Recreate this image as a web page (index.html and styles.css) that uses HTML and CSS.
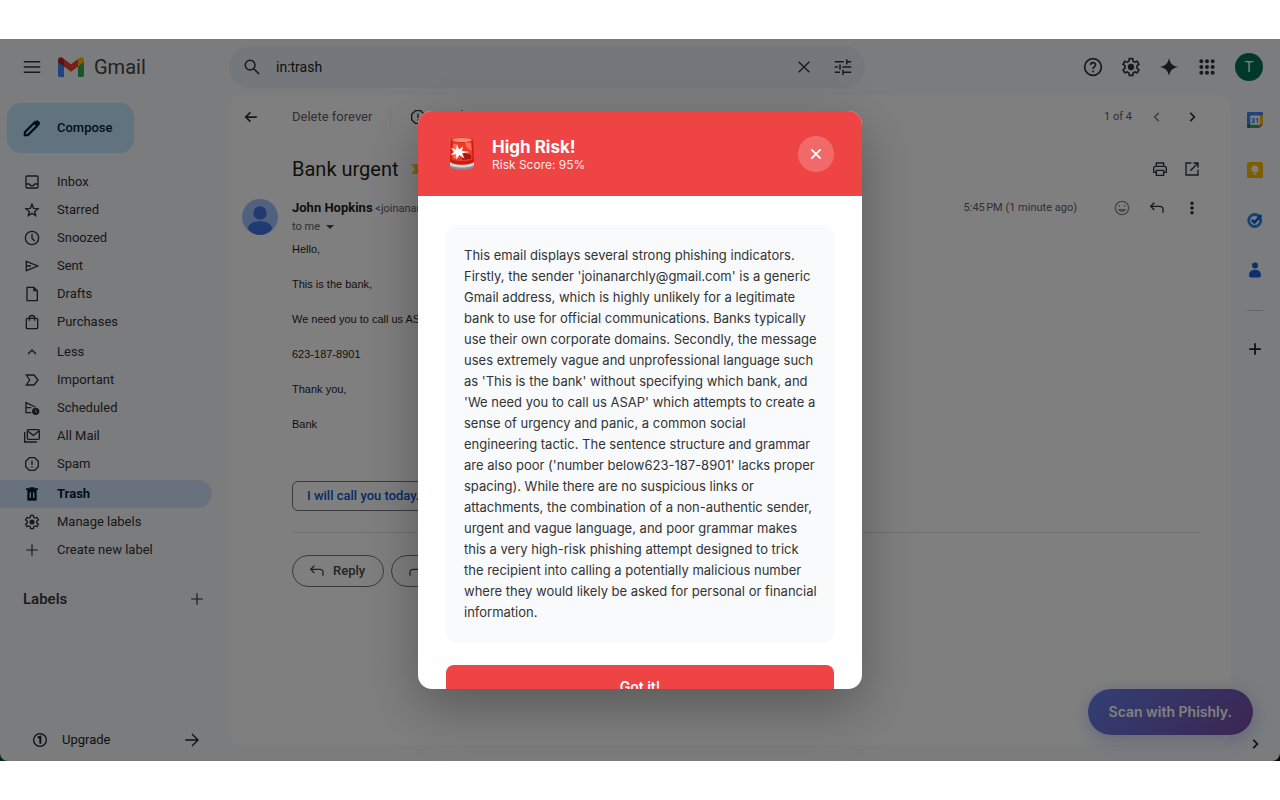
FILE: index.html
```html
<!DOCTYPE html>
<html lang="en">
<head>
<meta charset="utf-8">
<meta name="viewport" content="width=device-width, initial-scale=1">
<title>Bank urgent - Gmail</title>
<link rel="stylesheet" href="styles.css">
</head>
<body>
<svg class="sprite" aria-hidden="true">
  <symbol id="i-menu" viewBox="0 0 24 24"><path d="M1 5h22M1 12h22M1 19h22"/></symbol>
  <symbol id="i-search" viewBox="0 0 24 24"><circle cx="9.500" cy="9.500" r="6.500"/><path d="M14 14l7.500 7.500"/></symbol>
  <symbol id="i-close" viewBox="0 0 24 24"><path d="M4 4l16 16M20 4L4 20"/></symbol>
  <symbol id="i-tune" viewBox="0 0 24 24"><path d="M1 5h12M17 1.500v7M17 5h6M1 12h4M8 8.500v7M11 12h12M1 19h7M12 15.500v7M12 19h11"/></symbol>
  <symbol id="i-help" viewBox="0 0 24 24"><circle cx="12" cy="12" r="10"/><path d="M9 9.700c0-4 6-4 6-.3 0 2.300-3 2.500-3 5M12 16.300v2"/></symbol>
  <symbol id="i-gear" viewBox="0 0 24 24"><path d="M10 2h4l.6 3 2 1.200 2.900-1 2 3.500-2.300 2v2.700l2.300 2-2 3.500-2.900-1-2 1.200-.6 2.900h-4l-.6-2.900-2-1.200-2.900 1-2-3.500 2.300-2v-2.700l-2.300-2 2-3.500 2.900 1 2-1.200z"/><circle class="solid" cx="12" cy="12" r="3.800"/></symbol>
  <symbol id="i-spark" viewBox="0 0 24 24"><path class="solid" d="M12 0c1.400 7.200 4.800 10.600 12 12-7.200 1.400-10.600 4.800-12 12-1.400-7.200-4.800-10.600-12-12C7.200 10.600 10.600 7.200 12 0z"/></symbol>
  <symbol id="i-apps" viewBox="0 0 24 24"><path class="dots" d="M3.500 3.500h0M12 3.500h0M20.500 3.500h0M3.500 12h0M12 12h0M20.500 12h0M3.500 20.500h0M12 20.500h0M20.500 20.500h0"/></symbol>
  <symbol id="i-pencil" viewBox="0 0 24 24"><path class="bold" d="M2.500 21.500v-4L15.500 4.500l4 4L6.500 21.500z"/><path class="solid" d="M14 6l3-3.500c1-1.300 2.500-1.300 3.500 0l1.500 1.500c1 1 1 2.500 0 3.500L18 10z"/></symbol>
  <symbol id="i-inbox" viewBox="0 0 24 24"><rect x="3" y="3" width="18" height="18" rx="1.500"/><path d="M3 15h5c1 3.500 7 3.500 8 0h5"/></symbol>
  <symbol id="i-star" viewBox="0 0 24 24"><path d="M12 3.500l2.500 6 6.500.5-5 4.200 1.600 6.300L12 17l-5.600 3.500L8 14.200 3 10l6.500-.5z"/></symbol>
  <symbol id="i-clock" viewBox="0 0 24 24"><circle cx="12" cy="12" r="10"/><path d="M12 5.500v7l4 4"/></symbol>
  <symbol id="i-sent" viewBox="0 0 24 24"><path d="M3.500 5l17 7-17 7zM4 12h6.500"/></symbol>
  <symbol id="i-draft" viewBox="0 0 24 24"><path d="M4.500 2H15l5 5v15H4.500z"/><path class="solid" d="M14 2l6 6h-6z"/></symbol>
  <symbol id="i-bag" viewBox="0 0 24 24"><rect x="3.500" y="6.500" width="17" height="15.500" rx="1.500"/><path d="M8 10V6c0-5 8-5 8 0v4"/></symbol>
  <symbol id="i-up" viewBox="0 0 24 24"><path d="M6 15l6-6 6 6"/></symbol>
  <symbol id="i-important" viewBox="0 0 24 24"><path d="M3.500 4.500h11.500l6 7.500-6 7.500H3.500l5-7.500z"/></symbol>
  <symbol id="i-scheduled" viewBox="0 0 24 24"><path d="M11 19H3V4l14 6.500M3 11.500h8"/><circle class="solid" cx="17.500" cy="17" r="5.500"/><path class="hand" d="M17.500 14v3.500l2 1.500"/></symbol>
  <symbol id="i-allmail" viewBox="0 0 24 24"><rect x="5" y="2.500" width="18" height="14.500" rx="1.500"/><path d="M5.500 4.500L14 11l8.500-6.500M1 6v15h18.500"/></symbol>
  <symbol id="i-spam" viewBox="0 0 24 24"><path d="M8 2.500h8L21.500 8v8L16 21.500H8L2.500 16V8z"/><path d="M12 7v6.500M12 15.500v2"/></symbol>
  <symbol id="i-trash" viewBox="0 0 24 24"><path class="solid" d="M8.500 2h7v1.500H21V6H3V3.500h5.500z"/><path class="solid" d="M5 6h14v16H5z"/><path class="cut" d="M9.500 9.500v8.500M14.500 9.500v8.500"/></symbol>
  <symbol id="i-plus" viewBox="0 0 24 24"><path d="M12 2v20M2 12h20"/></symbol>
  <symbol id="i-one" viewBox="0 0 24 24"><circle cx="12" cy="12" r="9.500"/><path class="bold" d="M8.500 8.500L12.500 7v10.500"/></symbol>
  <symbol id="i-right" viewBox="0 0 24 24"><path d="M2 12h19M12 3l9 9-9 9"/></symbol>
  <symbol id="i-left" viewBox="0 0 24 24"><path d="M22 12H4M11 4l-8 8 8 8"/></symbol>
  <symbol id="i-prev" viewBox="0 0 24 24"><path d="M15 5l-7 7 7 7"/></symbol>
  <symbol id="i-next" viewBox="0 0 24 24"><path d="M9 5l7 7-7 7"/></symbol>
  <symbol id="i-move" viewBox="0 0 24 24"><path d="M12 2v12M7 9l5 5 5-5M3 16v5h18v-5"/></symbol>
  <symbol id="i-print" viewBox="0 0 24 24"><path d="M6.500 8V3h11v5M6.500 17H2.500v-6c0-2 1-3 3-3h13c2 0 3 1 3 3v6h-4"/><path d="M6.500 14h11v7.500h-11z"/></symbol>
  <symbol id="i-open" viewBox="0 0 24 24"><path d="M11 3H3v18h18v-8M14 3h7v7M21 3L9.500 14.500"/></symbol>
  <symbol id="i-smile" viewBox="0 0 24 24"><circle cx="12" cy="12" r="10"/><path d="M7.500 14.500c2 3.500 7 3.500 9 0zM8 8v2M16 8v2"/></symbol>
  <symbol id="i-reply" viewBox="0 0 24 24"><path d="M8 4L2.500 9.500 8 15M3 9.500h13c3 0 5 2 5 4.500v5"/></symbol>
  <symbol id="i-forward" viewBox="0 0 24 24"><path d="M16 4l5.500 5.500L16 15M21 9.500H8c-3 0-5 2-5 4.500v5"/></symbol>
  <symbol id="i-dots" viewBox="0 0 24 24"><path class="dots" d="M12 4h0M12 12h0M12 20h0"/></symbol>
</svg>

<div class="frame">
  <div class="app">
    <header class="topbar">
      <div class="brand">
        <button class="icon-btn" aria-label="Main menu"><svg class="icon l"><use href="#i-menu"/></svg></button>
        <svg class="logo" viewBox="0 0 26 20" aria-hidden="true">
          <path fill="#4285f4" d="M0 4l6 4.500V20H1.800C.7 20 0 19.300 0 18.200z"/>
          <path fill="#34a853" d="M20 8.500L26 4v14.200c0 1.100-.7 1.800-1.800 1.800H20z"/>
          <path fill="#fbbc04" d="M20 2l1.600-1.200C23.500-.6 26 .5 26 3v2l-6 4.500z"/>
          <path fill="#ea4335" d="M6 9.500V2l7 5.200L20 2v7.500l-7 5.200z"/>
          <path fill="#c5221f" d="M0 3C0 .5 2.500-.6 4.400.8L6 2v7.500L0 5z"/>
        </svg>
        <span class="brand-name">Gmail</span>
      </div>
      <form class="search">
        <button type="button" class="icon-btn" aria-label="Search"><svg class="icon l"><use href="#i-search"/></svg></button>
        <input type="text" aria-label="Search mail" value="in:trash">
        <button type="button" class="icon-btn" aria-label="Clear search"><svg class="icon m"><use href="#i-close"/></svg></button>
        <button type="button" class="icon-btn" aria-label="Search options"><svg class="icon l"><use href="#i-tune"/></svg></button>
      </form>
      <div class="account">
        <button class="icon-btn" aria-label="Support"><svg class="icon xl"><use href="#i-help"/></svg></button>
        <button class="icon-btn" aria-label="Settings"><svg class="icon xl"><use href="#i-gear"/></svg></button>
        <button class="icon-btn" aria-label="Gemini"><svg class="icon l"><use href="#i-spark"/></svg></button>
        <button class="icon-btn" aria-label="Google apps"><svg class="icon m"><use href="#i-apps"/></svg></button>
        <button class="profile" aria-label="Account">T</button>
      </div>
    </header>

    <aside class="sidebar">
      <button class="compose"><svg class="icon l"><use href="#i-pencil"/></svg>Compose</button>
      <nav class="folders" aria-label="Folders">
        <ul>
          <li><a href="#inbox"><svg class="icon"><use href="#i-inbox"/></svg>Inbox</a></li>
          <li><a href="#starred"><svg class="icon"><use href="#i-star"/></svg>Starred</a></li>
          <li><a href="#snoozed"><svg class="icon"><use href="#i-clock"/></svg>Snoozed</a></li>
          <li><a href="#sent"><svg class="icon"><use href="#i-sent"/></svg>Sent</a></li>
          <li><a href="#drafts"><svg class="icon"><use href="#i-draft"/></svg>Drafts</a></li>
          <li><a href="#purchases"><svg class="icon"><use href="#i-bag"/></svg>Purchases</a></li>
        </ul>
        <ul>
          <li><a href="#less"><svg class="icon"><use href="#i-up"/></svg>Less</a></li>
          <li><a href="#important"><svg class="icon"><use href="#i-important"/></svg>Important</a></li>
          <li><a href="#scheduled"><svg class="icon"><use href="#i-scheduled"/></svg>Scheduled</a></li>
          <li><a href="#all"><svg class="icon"><use href="#i-allmail"/></svg>All Mail</a></li>
          <li><a href="#spam"><svg class="icon"><use href="#i-spam"/></svg>Spam</a></li>
        </ul>
        <ul>
          <li><a class="current" href="#trash" aria-current="page"><svg class="icon"><use href="#i-trash"/></svg>Trash</a></li>
          <li><a href="#labels"><svg class="icon"><use href="#i-gear"/></svg>Manage labels</a></li>
          <li><a href="#new-label"><svg class="icon s thin"><use href="#i-plus"/></svg>Create new label</a></li>
        </ul>
      </nav>
      <div class="labels">
        <h2>Labels</h2>
        <button class="icon-btn" aria-label="Add label"><svg class="icon s thin"><use href="#i-plus"/></svg></button>
      </div>
      <a class="upgrade" href="#upgrade"><svg class="icon"><use href="#i-one"/></svg><span>Upgrade</span><svg class="icon"><use href="#i-right"/></svg></a>
    </aside>

    <main class="mail">
      <div class="toolbar">
        <button class="icon-btn" aria-label="Back"><svg class="icon s"><use href="#i-left"/></svg></button>
        <button class="delete">Delete forever</button>
        <div class="tools">
          <button class="icon-btn" aria-label="Report spam"><svg class="icon"><use href="#i-spam"/></svg></button>
          <button class="icon-btn" aria-label="Move to"><svg class="icon"><use href="#i-move"/></svg></button>
        </div>
        <div class="actions">
          <span class="count">1 of 4</span>
          <button class="icon-btn faint" aria-label="Newer"><svg class="icon s"><use href="#i-prev"/></svg></button>
          <button class="icon-btn" aria-label="Older"><svg class="icon s"><use href="#i-next"/></svg></button>
        </div>
      </div>

      <article class="message">
        <div class="subject">
          <h1>Bank urgent</h1>
          <svg class="marker" viewBox="0 0 16 10" aria-hidden="true"><path d="M0 0h10l5 5-5 5H0l4-5z"/></svg>
          <div class="actions close-set">
            <button class="icon-btn" aria-label="Print"><svg class="icon"><use href="#i-print"/></svg></button>
            <button class="icon-btn" aria-label="Open in new window"><svg class="icon"><use href="#i-open"/></svg></button>
          </div>
        </div>
        <svg class="avatar" viewBox="0 0 36 36" aria-hidden="true">
          <circle cx="18" cy="18" r="18" fill="#a0c3ff"/>
          <circle cx="18" cy="14" r="6.700" fill="#4374e0"/>
          <path fill="#4374e0" d="M6 30c0-10.500 24-10.500 24 0-6 8-18 8-24 0z"/>
        </svg>
        <div class="sender">
          <div class="from"><strong>John Hopkins</strong> &lt;joinanarchly@gmail.com&gt;</div>
          <button class="to">to me <span class="caret"></span></button>
        </div>
        <div class="meta">
          <time>5:45&#8239;PM (1 minute ago)</time>
          <button class="icon-btn faint" aria-label="Add reaction"><svg class="icon"><use href="#i-smile"/></svg></button>
          <button class="icon-btn" aria-label="Reply"><svg class="icon"><use href="#i-reply"/></svg></button>
          <button class="icon-btn" aria-label="More"><svg class="icon s"><use href="#i-dots"/></svg></button>
        </div>
        <div class="content">
          <p>Hello,</p>
          <p>This is the bank,</p>
          <p>We need you to call us ASAP number below</p>
          <p>623-187-8901</p>
          <p>Thank you,</p>
          <p>Bank</p>
        </div>
        <div class="smart"><button>I will call you today.</button></div>
        <div class="respond">
          <button><svg class="icon"><use href="#i-reply"/></svg>Reply</button>
          <button><svg class="icon"><use href="#i-forward"/></svg>Forward</button>
        </div>
      </article>
    </main>

    <aside class="rail" aria-label="Side panel">
      <button aria-label="Calendar"><svg class="tool" viewBox="0 0 18 18">
        <path fill="#4285f4" d="M1 2.500C1 1.500 1.500 1 2.500 1h13c1 0 1.500.5 1.500 1.500V5H4.500v9H1z"/>
        <path fill="#fbbc04" d="M13.500 4.500H17v9h-3.500z"/><path fill="#34a853" d="M4.500 13.500h9V17h-9z"/>
        <path fill="#188038" d="M1 13.500h3.500V17h-2C1.500 17 1 16.500 1 15.500z"/><path fill="#ea4335" d="M13.500 13.500H17L13.500 17z"/>
        <path fill="#fff" d="M4.500 4.500h9v9h-9z"/><text x="9" y="11.500">31</text></svg></button>
      <button aria-label="Keep"><svg class="tool" viewBox="0 0 18 18"><rect x="1" y="1" width="16" height="16" rx="1.500" fill="#fbbc04"/><circle cx="9" cy="8" r="3.500" fill="#fff"/><path fill="#fff" d="M7.500 12.300h3v1.300h-3z"/></svg></button>
      <button aria-label="Tasks"><svg class="tool" viewBox="0 0 18 18" fill="none"><circle cx="8.700" cy="9.500" r="6" stroke="#2684fc" stroke-width="2.800"/><path d="M5.800 8.800l2.600 2.600 7-7.200" stroke="#0066da" stroke-width="2.600"/></svg></button>
      <button aria-label="Contacts"><svg class="tool" viewBox="0 0 18 18" fill="#1a5fdc"><circle cx="9" cy="4.500" r="3"/><path d="M3 14c0-7 12-7 12 0 0 1.500-.7 2.500-2 2.500H5c-1.300 0-2-1-2-2.500z"/></svg></button>
      <hr>
      <button class="add" aria-label="Get add-ons"><svg class="icon s"><use href="#i-plus"/></svg></button>
      <button class="collapse" aria-label="Hide side panel"><svg class="icon s"><use href="#i-next"/></svg></button>
    </aside>

    <button class="scan">Scan with Phishly.</button>
  </div>

  <div class="overlay">
    <section class="modal" role="dialog" aria-modal="true" aria-labelledby="risk-title">
      <header class="risk">
        <svg class="siren" viewBox="0 0 26 34" aria-hidden="true">
          <path fill="#8b8f92" d="M1 26h24v3c0 5-24 5-24 0z"/>
          <path fill="#d4d6d6" d="M1 25h24v2.500c0 4-24 4-24 0z"/>
          <path fill="#c91d12" d="M2 3c.5-3 21.500-3 22 0l1 21c0 5-24 5-24 0z"/>
          <path fill="#ee3a26" d="M3.500 4c3 2 16 2 19 0l1 18c-3 3-18 3-21 0z"/>
          <ellipse cx="13" cy="3" rx="10" ry="2" fill="#ff8b75"/>
          <path fill="#ff7058" d="M4.500 7h3v15l-3-1zM16 5l6 1 .5 8-5-4z"/>
          <path fill="#a91510" d="M15 16l7 2v4l-9 1z"/>
          <path fill="#fff" d="M8 7l2 5.500 4-3-1 4.500 8 1-8 1.200 2.500 5.300-5-3.500-3 4.500-.5-5.500L1.500 18l3.500-3-3-4 5 1.500z"/>
        </svg>
        <div class="risk-text">
          <h2 id="risk-title">High Risk!</h2>
          <p>Risk Score: 95%</p>
        </div>
        <button class="dismiss" aria-label="Close"><svg class="icon s"><use href="#i-close"/></svg></button>
      </header>
      <div class="risk-body">
        <p class="analysis">This email displays several strong phishing indicators. Firstly, the sender 'joinanarchly@gmail.com' is a generic Gmail address, which is highly unlikely for a legitimate bank to use for official communications. Banks typically use their own corporate domains. Secondly, the message uses extremely vague and unprofessional language such as 'This is the bank' without specifying which bank, and 'We need you to call us ASAP' which attempts to create a sense of urgency and panic, a common social engineering tactic. The sentence structure and grammar are also poor ('number below623-187-8901' lacks proper spacing). While there are no suspicious links or attachments, the combination of a non-authentic sender, urgent and vague language, and poor grammar makes this a very high-risk phishing attempt designed to trick the recipient into calling a potentially malicious number where they would likely be asked for personal or financial information.</p>
        <button class="confirm">Got it!</button>
      </div>
    </section>
  </div>
</div>
</body>
</html>
```
FILE: styles.css
```css
* { box-sizing: border-box; }
body {
  margin: 0;
  min-height: 100vh;
  padding: 39px 0;
  display: flex;
  flex-direction: column;
  background: #fff;
  color: #1f1f1f;
  font: 13px/18px Roboto, "Liberation Sans", sans-serif;
}
h1, h2, p, ul { margin: 0; padding: 0; }
ul { list-style: none; }
a { color: inherit; text-decoration: none; }
button {
  border: 0;
  padding: 0;
  background: none;
  color: inherit;
  font: inherit;
  cursor: pointer;
}
.sprite { position: absolute; width: 0; height: 0; }

.icon {
  width: 16px;
  height: 16px;
  flex: none;
  fill: none;
  stroke: currentColor;
  stroke-width: 2;
}
.icon.s { width: 14px; height: 14px; stroke-width: 3; }
.icon.s.thin { stroke-width: 2; }
.icon.l { width: 18px; height: 18px; }
.icon.xl { width: 20px; height: 20px; }
.solid { fill: currentColor; stroke: none; }
.dots { stroke-width: 6; stroke-linecap: round; }
.cut { stroke: #d3e3fd; }
.hand { stroke: #f6f8fc; stroke-width: 1; }
.bold { stroke-width: 3; }
.icon-btn {
  width: 20px;
  height: 20px;
  display: grid;
  place-items: center;
  flex: none;
  color: #303236;
}
.icon-btn.faint { color: #8a8c8e; }

.frame {
  position: relative;
  flex: 1;
  display: grid;
  background: linear-gradient(90deg, #0a5a20 0 50%, #111 50%);
}
.app {
  position: relative;
  display: grid;
  grid-template-columns: 229px 1fr 49px;
  grid-template-rows: 56px 1fr;
  background: #f6f8fc;
  border-radius: 0 0 8px 8px;
}

.topbar {
  grid-column: 1 / -1;
  display: grid;
  grid-template-columns: 229px minmax(0, 636px) 1fr;
  align-items: center;
}
.brand { display: flex; align-items: center; padding-left: 22px; }
.logo { width: 26px; height: 20px; margin: 0 10px 0 16px; }
.brand-name { color: #444746; font-size: 20px; line-height: 24px; }
.search {
  display: flex;
  align-items: center;
  height: 42px;
  padding: 0 12px 0 13px;
  border-radius: 21px;
  background: #e9eef6;
}
.search input {
  flex: 1;
  min-width: 0;
  margin: 0 0 0 14px;
  padding: 0;
  border: 0;
  outline: 0;
  background: none;
  color: #1f1f1f;
  font: 14px/20px Roboto, "Liberation Sans", sans-serif;
}
.search .icon-btn + .icon-btn { margin-left: 19px; }
.account {
  display: flex;
  align-items: center;
  justify-content: flex-end;
  gap: 18px;
  padding-right: 17px;
}
.profile {
  width: 28px;
  height: 28px;
  border-radius: 50%;
  background: #04704f;
  color: #fff;
  font-size: 15px;
}

.sidebar { display: flex; flex-direction: column; align-items: stretch; padding-bottom: 12px; }
.compose {
  display: flex;
  align-items: center;
  align-self: flex-start;
  gap: 16px;
  height: 50px;
  margin: 8px 0 15px 7px;
  padding: 0 21px 0 16px;
  border-radius: 14px;
  background: #c2e7ff;
  color: #001d35;
  font-weight: 500;
}
.folders { display: grid; gap: 2px; padding-right: 17px; }
.folders a {
  display: grid;
  grid-template-columns: 16px 1fr;
  align-items: center;
  justify-items: start;
  gap: 17px;
  height: 28px;
  padding-left: 24px;
  border-radius: 0 14px 14px 0;
  color: #303236;
}
.folders .icon { justify-self: center; }
.folders a.current { background: #d3e3fd; color: #001d35; font-weight: 700; }
.labels {
  display: flex;
  align-items: center;
  justify-content: space-between;
  margin-top: 25px;
  padding: 0 22px 0 23px;
}
.labels h2 { font-size: 15px; line-height: 20px; font-weight: 500; color: #303236; }
.upgrade {
  display: flex;
  align-items: center;
  gap: 14px;
  height: 18px;
  margin: auto 29px 0 32px;
}
.upgrade span { flex: 1; }

.mail {
  margin-bottom: 16px;
  border-radius: 14px;
  background: #fff;
}
.actions, .meta { display: flex; align-items: center; gap: 15px; margin-left: auto; color: #5e6064; font-size: 11px; }
.actions.close-set { gap: 12px; }
.toolbar {
  display: flex;
  align-items: center;
  height: 44px;
  padding: 0 29px 0 12px;
  color: #5e6064;
}
.delete { margin-left: 31px; }
.tools { display: flex; gap: 24px; margin-left: 18px; padding-left: 17px; border-left: 1px solid #eceef0; }
.message {
  display: grid;
  grid-template-columns: 36px auto 1fr;
  column-gap: 14px;
  padding: 10px 29px 24px 13px;
}
.subject {
  grid-column: 2 / -1;
  display: flex;
  align-items: center;
  height: 40px;
}
.subject h1 { font-size: 20px; line-height: 28px; font-weight: 400; }
.marker { width: 16px; height: 10px; margin-left: 12px; fill: #f2c744; }
.avatar { width: 36px; height: 36px; margin-top: 10px; }
.sender { padding-top: 10px; color: #5e6064; font-size: 11px; }
.sender strong { color: #1f1f1f; font-size: 13px; }
.to { display: flex; align-items: center; gap: 6px; }
.caret { border: 4px solid transparent; border-top-color: #444746; border-bottom: 0; }
.meta { height: 20px; margin-top: 9px; }
.meta time { margin-right: 20px; }
.content {
  grid-column: 2 / -1;
  display: grid;
  gap: 19px;
  margin-top: 5px;
  font: 11px/16px "Liberation Sans", Arial, sans-serif;
}
.smart {
  grid-column: 2 / -1;
  margin-top: 49px;
  padding-bottom: 21px;
  border-bottom: 1px solid #e3e5e8;
}
.smart button {
  height: 30px;
  padding: 0 14px;
  border: 1px solid #747775;
  border-radius: 6px;
  color: #0b57d0;
  font-weight: 500;
}
.respond { grid-column: 2 / -1; display: flex; gap: 7px; margin-top: 22px; }
.respond button {
  display: flex;
  align-items: center;
  gap: 8px;
  height: 32px;
  padding: 0 18px 0 16px;
  border: 1px solid #747775;
  border-radius: 16px;
  color: #444746;
  font-weight: 500;
}

.rail { display: flex; flex-direction: column; align-items: center; padding: 16px 1px 8px 0; }
.rail button { width: 18px; height: 18px; margin-bottom: 32px; display: grid; place-items: center; }
.rail hr { width: 16px; margin: -1px 0 29px; border: 0; border-top: 1px solid #c9cdd3; }
.rail .collapse { margin: auto 0 0; }
.tool { width: 18px; height: 18px; }
.tool text { fill: #1a73e8; font: 700 7px Roboto, sans-serif; text-anchor: middle; }

.scan {
  position: absolute;
  right: 27px;
  bottom: 26px;
  height: 46px;
  padding: 0 21px;
  border-radius: 23px;
  background: linear-gradient(135deg, #667eea, #764ba2);
  box-shadow: 0 4px 18px rgba(102, 126, 234, .4);
  color: #fff;
  font: 600 14px/18px Inter, sans-serif;
}

.overlay {
  position: absolute;
  inset: 0;
  display: grid;
  grid-template-rows: 100%;
  place-items: center;
  background: rgba(0, 0, 0, .5);
}
.modal {
  width: min(444px, 90%);
  max-height: 80%;
  overflow: hidden;
  border-radius: 14px;
  background: #fff;
  box-shadow: 0 18px 54px rgba(0, 0, 0, .3);
  font-family: Inter, "Liberation Sans", sans-serif;
}
.risk {
  display: flex;
  align-items: center;
  height: 85px;
  padding: 0 28px 0 31px;
  background: #ef4444;
  color: #fff;
}
.siren { width: 26px; height: 34px; margin-right: 17px; }
.risk-text { flex: 1; padding-top: 4px; }
.risk-text h2 { font-size: 17px; line-height: 18px; font-weight: 700; }
.risk-text p { font-size: 12px; line-height: 17px; opacity: .9; }
.dismiss {
  width: 36px;
  height: 36px;
  display: grid;
  place-items: center;
  border-radius: 50%;
  background: rgba(255, 255, 255, .2);
}
.risk-body { padding: 29px 28px; }
.analysis {
  margin-bottom: 22px;
  padding: 20px 14px 20px 18px;
  border-radius: 10px;
  background: #f8fafc;
  color: #333;
  font-size: 13px;
  line-height: 21px;
}
.confirm {
  width: 100%;
  height: 44px;
  border-radius: 8px;
  background: #ef4444;
  color: #fff;
  font-size: 14px;
  font-weight: 600;
}
```
